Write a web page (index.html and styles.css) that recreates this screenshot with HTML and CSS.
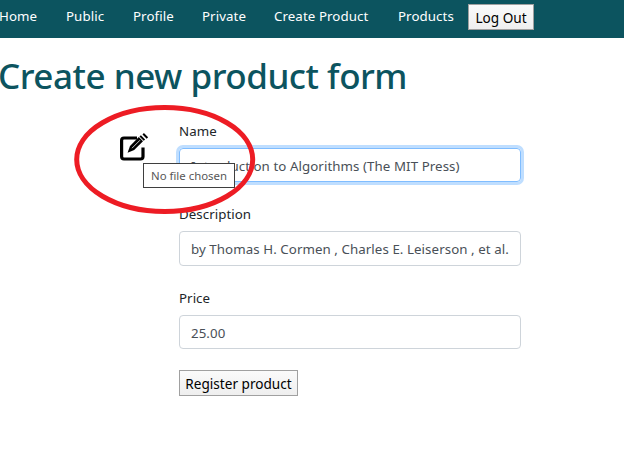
FILE: index.html
```html
<!DOCTYPE html>
<html lang="en">
<head>
<meta charset="utf-8">
<title>Create new product</title>
<link rel="stylesheet" href="styles.css">
</head>
<body>
<nav class="navbar">
  <a class="home">Home</a>
  <a class="public">Public</a>
  <a class="profile">Profile</a>
  <a class="private">Private</a>
  <a class="create">Create Product</a>
  <a class="products">Products</a>
  <button class="btn logout">Log Out</button>
</nav>
<h1>Create new product form</h1>
<main class="content">
  <div class="upload">
    <svg class="edit-icon" width="31" height="29" viewBox="0 0 31 29">
      <path d="M18 5H5Q2.6 5 2.6 7.5V23.5Q2.6 26 5 26H21.5Q24 26 24 23.5V14.5" fill="none" stroke="#000" stroke-width="3.2"/>
      <path d="M8.6 19.8 11 12.9 19.8 4.1 24 8.3 15.2 17.1Z"/>
      <path d="M21.2 2.9 25.4 7.1M24.2 .8 28.4 5" stroke="#000" stroke-width="2"/>
      <path d="M13 15.2 21 7.2" stroke="#fff" stroke-width=".8"/>
    </svg>
    <div class="tooltip">No file chosen</div>
  </div>
  <form class="product-form">
    <label>Name</label>
    <div class="field focused">Introduction to Algorithms (The MIT Press)</div>
    <label>Description</label>
    <div class="field tall">by Thomas H. Cormen , Charles E. Leiserson , et al.</div>
    <label>Price</label>
    <div class="field">25.00</div>
    <button type="button" class="btn register">Register product</button>
  </form>
</main>
<svg class="highlight" width="182" height="112" viewBox="0 0 182 112"><ellipse cx="90.7" cy="55.5" rx="88" ry="52" fill="none" stroke="#ed1c24" stroke-width="5"/></svg>
</body>
</html>
```
FILE: styles.css
```css
* { box-sizing: border-box; }
body {
  margin: 0;
  width: 624px;
  height: 454px;
  overflow: hidden;
  position: relative;
  background: #fff;
  color: #212529;
  font: 13.3px/20px "Noto Sans", "Open Sans", sans-serif;
}
.navbar {
  height: 38px;
  display: flex;
  align-items: flex-start;
  padding-top: 4px;
  background: #0c545f;
  color: #fff;
  white-space: nowrap;
}
.navbar a { padding-top: 2px; flex: none; letter-spacing: .08px; }
.home { width: 67px; margin-left: -1px; }
.public { width: 67px; }
.profile { width: 69px; }
.private { width: 72px; }
.create { width: 124px; }
.products { width: 70px; }
.btn {
  height: 26px;
  padding: 0;
  border: 1px solid #a0a0a0;
  background: linear-gradient(#fafafa, #eee);
  color: #000;
  font: 13.6px/23px "Noto Sans", "Open Sans", sans-serif;
  white-space: nowrap;
}
.logout { width: 66px; }
h1 {
  margin: 15px 0 0 -2px;
  font: 500 35px/46px "Noto Sans", "Open Sans", sans-serif;
  letter-spacing: -.48px;
  color: #0c545f;
  white-space: nowrap;
}
.content { display: flex; }
.upload { width: 179px; flex: none; position: relative; padding: 34px 0 0 119px; }
.edit-icon { display: block; }
.tooltip {
  position: absolute;
  z-index: 1;
  left: 143px;
  top: 64px;
  width: 92px;
  height: 25px;
  padding-left: 7px;
  border: 1px solid #3f3f3f;
  background: #fff;
  color: #575757;
  font-size: 11.4px;
  line-height: 23px;
  white-space: nowrap;
}
.product-form { width: 342px; padding-top: 22px; }
label { display: block; height: 27px; letter-spacing: .05px; }
.field {
  height: 34px;
  margin-bottom: 22px;
  padding: 0 11px;
  border: 1px solid #ced4da;
  border-radius: 4px;
  color: #495057;
  line-height: 35px;
  letter-spacing: .07px;
  white-space: nowrap;
}
.tall { height: 35px; }
.focused { border-color: #80bdff; box-shadow: 0 0 0 3px #bfdeff; }
.register { display: block; width: 119px; margin-top: -1px; }
.highlight { position: absolute; z-index: 2; left: 74px; top: 104px; }
```
